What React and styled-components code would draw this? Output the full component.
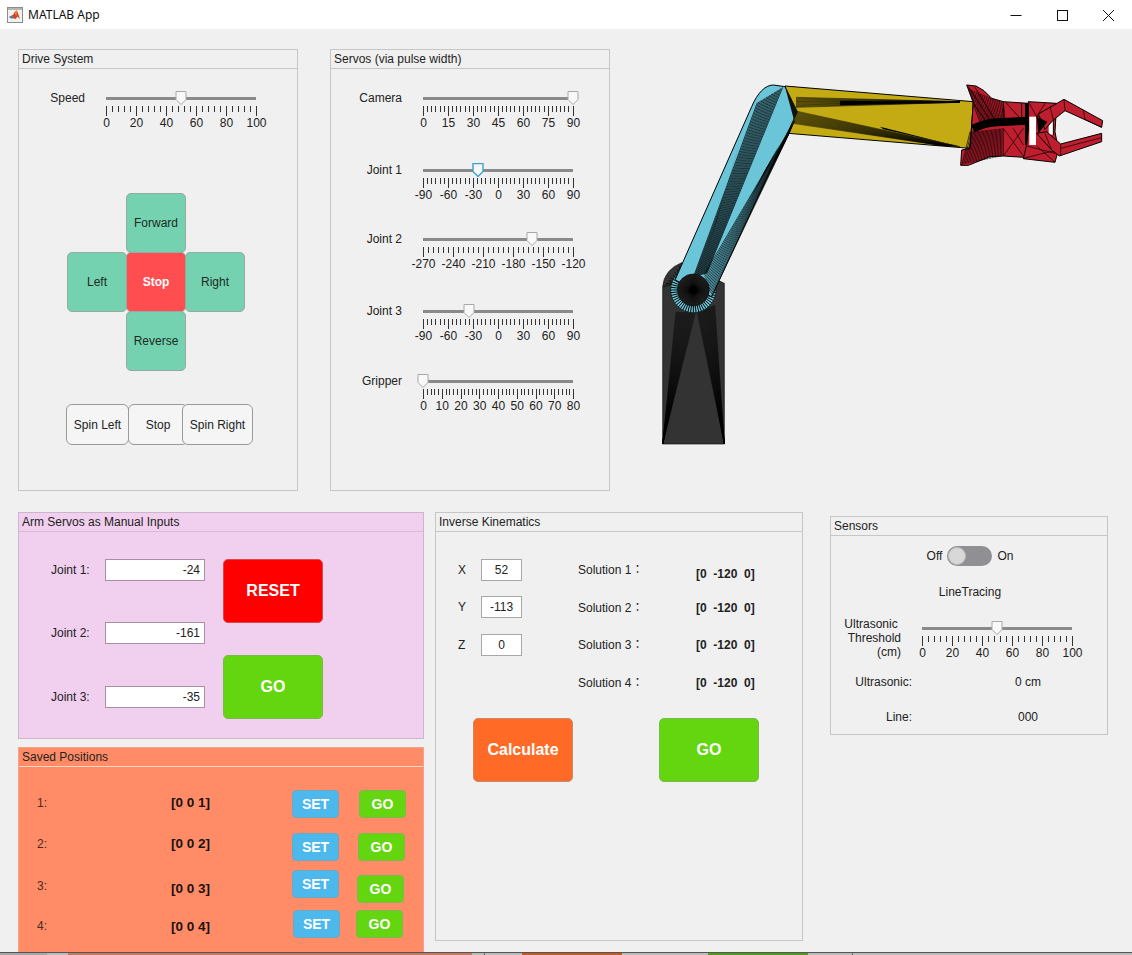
import React from 'react';
import styled, { createGlobalStyle } from 'styled-components';

const GlobalStyle = createGlobalStyle`
    html, body {
        margin: 0;
        padding: 0;
        background: #f0f0f0;
    }
    body {
        font-family: "Liberation Sans", Arial, sans-serif;
        font-size: 12px;
        color: #222;
    }
`

const Page = styled.div`
    width: 1132px;
    height: 955px;
    display: flex;
    flex-direction: column;
    overflow: hidden;
`

const TitleBar = styled.div`
    height: 29px;
    flex: none;
    background: #fff;
    display: flex;
    align-items: center;
    padding-left: 7px;
    font-family: "Noto Sans", sans-serif;
    font-size: 12px;
    color: #111;
`

const AppName = styled.span`
    margin-left: 5px;
`

const WindowButtons = styled.div`
    margin-left: auto;
    display: flex;
    gap: 26px;
    padding-right: 14px;
`

const WinIcon = styled.svg`
    width: 20px;
    height: 20px;
    display: block;
    fill: none;
    stroke: #111;
    stroke-width: 1;
`

const Content = styled.div`
    flex: 1;
    min-height: 0;
    padding: 20px 0 0 18px;
    display: flex;
    flex-direction: column;
`

const TopRow = styled.div`
    display: flex;
    height: 442px;
    flex: none;
`

const BottomRow = styled.div`
    display: flex;
    flex: 1;
    min-height: 0;
    margin-top: 21px;
    align-items: flex-start;
`

const LeftStack = styled.div`
    width: 406px;
    height: 100%;
    display: flex;
    flex-direction: column;
    gap: 8px;
`

const Panel = styled.div`
    box-sizing: border-box;
    width: ${props => props.$width}px;
    height: ${props => props.$height ? props.$height + 'px' : 'auto'};
    flex: ${props => props.$grow ? 1 : 'none'};
    margin-left: ${props => props.$left || 0}px;
    margin-top: ${props => props.$top || 0}px;
    background: ${props => props.$bg || '#f0f0f0'};
    border: 1px solid ${props => props.$line || '#c6c6c6'};
    border-bottom-width: ${props => props.$open ? 0 : 1}px;
`

const PanelTitle = styled.div`
    height: 18px;
    line-height: 18px;
    padding-left: 3px;
    border-bottom: 1px solid ${props => props.$line || '#c6c6c6'};
`

const PanelBody = styled.div`
    padding-top: ${props => props.$pad}px;
`

// sliders
const SliderRow = styled.div`
    display: flex;
    align-items: flex-start;
    margin-top: ${props => props.$top || 0}px;
`

const SliderLabel = styled.div`
    width: ${props => props.$width}px;
    margin-right: 21px;
    text-align: right;
    line-height: 14px;
    flex: none;
`

const SliderBox = styled.div`
    position: relative;
    width: 151px;
    height: 39px;
    margin-top: ${props => props.$top || 0}px;
`

const Track = styled.div`
    width: 150px;
    height: 3px;
    margin-top: 6px;
    background: #8a8a8a;
`

const Thumb = styled.svg`
    position: absolute;
    top: 0;
    width: 12px;
    height: 14px;
    margin-left: -6px;
    fill: #f8f8f8;
    stroke: ${props => props.$active ? '#3aa0d2' : '#a8a8a8'};
    stroke-width: ${props => props.$active ? 1.4 : 1};
`

const Ticks = styled.div`
    display: flex;
    justify-content: space-between;
    align-items: flex-start;
    height: 10px;
    margin-top: 6px;
`

const Tick = styled.i`
    width: 1px;
    height: ${props => props.$major ? 10 : 6}px;
    background: #333;
`

const TickLabels = styled.div`
    display: flex;
    justify-content: space-between;
    line-height: 14px;
`

const TickLabel = styled.span`
    width: 1px;
    display: flex;
    justify-content: center;
    white-space: nowrap;
`

function Slider({ labels, sub, min, max, value, active, top }) {
    const count = (labels.length - 1) * sub;
    const ticks = [];
    for (let i = 0; i <= count; i++) {
        ticks.push(<Tick key={i} $major={i % sub === 0} />);
    }
    return (
        <SliderBox $top={top}>
            <Track />
            <Thumb $active={active} viewBox="0 0 12 14" style={{ left: ((value - min) / (max - min)) * 150 }}>
                <path d="M1 .5H11V8.5L6 13.5L1 8.5Z" />
            </Thumb>
            <Ticks>{ticks}</Ticks>
            <TickLabels>
                {labels.map(l => <TickLabel key={l}>{l}</TickLabel>)}
            </TickLabels>
        </SliderBox>
    )
}

// drive buttons
const Dpad = styled.div`
    display: grid;
    grid-template-columns: repeat(3, 59px);
    grid-template-rows: repeat(3, 59px);
    margin: 63px 0 0 48px;
`

const DriveButton = styled.div`
    box-sizing: border-box;
    width: 60px;
    height: 60px;
    grid-column: ${props => props.$col};
    grid-row: ${props => props.$row};
    z-index: ${props => props.$stop ? 1 : 0};
    display: flex;
    align-items: center;
    justify-content: center;
    border-radius: 5px;
    border: 1px solid #98a8a2;
    background: ${props => props.$stop ? '#ff4d50' : '#75d2b0'};
    color: ${props => props.$stop ? '#fff' : '#1c2a25'};
    font-weight: ${props => props.$stop ? 'bold' : 'normal'};
`

const SpinRow = styled.div`
    display: flex;
    margin: 34px 0 0 47px;
`

const SpinButton = styled.div`
    box-sizing: border-box;
    width: ${props => props.$width}px;
    height: 41px;
    margin-left: ${props => props.$overlap || 0}px;
    display: flex;
    align-items: center;
    justify-content: center;
    border: 1px solid #9a9a9a;
    border-radius: 6px;
    background: #f5f5f5;
`

// arm servo panel
const ArmBody = styled.div`
    display: flex;
    padding: 27px 0 0 32px;
`

const JointColumn = styled.div`
    display: flex;
    flex-direction: column;
`

const JointRow = styled.div`
    display: flex;
    align-items: center;
    margin-top: ${props => props.$top || 0}px;
`

const JointLabel = styled.div`
    width: 54px;
`

const NumberField = styled.div`
    box-sizing: border-box;
    width: ${props => props.$width}px;
    height: 22px;
    line-height: 20px;
    background: #fff;
    border: 1px solid ${props => props.$line || '#a8a8a8'};
    text-align: ${props => props.$center ? 'center' : 'right'};
    padding: 0 4px;
`

const ButtonColumn = styled.div`
    display: flex;
    flex-direction: column;
    gap: 32px;
    margin-left: 18px;
`

const BigButton = styled.div`
    box-sizing: border-box;
    width: 100px;
    height: 64px;
    display: flex;
    align-items: center;
    justify-content: center;
    border-radius: 5px;
    border: 1px solid ${props => props.$line};
    background: ${props => props.$bg};
    color: #fff;
    font-size: 16px;
    font-weight: bold;
`

// saved positions
const SavedList = styled.div`
    padding-left: 18px;
`

const SavedRow = styled.div`
    display: flex;
    align-items: flex-start;
    height: 28px;
    margin-top: ${props => props.$top}px;
`

const SavedIndex = styled.div`
    width: 134px;
    flex: none;
    line-height: 14px;
    margin-top: ${props => props.$dy}px;
    color: #4a2a1e;
`

const SavedValue = styled.div`
    width: 121px;
    flex: none;
    line-height: 14px;
    margin-top: ${props => props.$dy}px;
    font-size: 13.5px;
    font-weight: bold;
    color: #1a1210;
`

const SmallButton = styled.div`
    box-sizing: border-box;
    width: 47px;
    height: 28px;
    flex: none;
    margin-left: ${props => props.$left || 0}px;
    margin-top: ${props => props.$dy || 0}px;
    display: flex;
    align-items: center;
    justify-content: center;
    border-radius: 4px;
    border: 1px solid ${props => props.$line};
    background: ${props => props.$bg};
    color: #fff;
    font-size: 14px;
    font-weight: bold;
`

// inverse kinematics
const IkTop = styled.div`
    display: flex;
    padding: 27px 0 0 22px;
`

const AxisColumn = styled.div`
    display: flex;
    flex-direction: column;
`

const AxisRow = styled.div`
    display: flex;
    align-items: center;
    margin-top: ${props => props.$top || 0}px;
`

const AxisLabel = styled.div`
    width: 23px;
`

const SolutionColumn = styled.div`
    margin: 4px 0 0 56px;
    display: flex;
    flex-direction: column;
`

const SolutionRow = styled.div`
    display: flex;
    align-items: flex-start;
    height: 14px;
    line-height: 14px;
    margin-top: ${props => props.$top || 0}px;
`

const SolutionName = styled.div`
    width: 118px;
    font-family: "Liberation Sans", "Noto Sans CJK JP", sans-serif;
`

const SolutionValue = styled.div`
    font-weight: bold;
    white-space: pre;
    margin-top: ${props => props.$dy || 0}px;
`

const IkButtons = styled.div`
    display: flex;
    gap: 86px;
    margin: 28px 0 0 37px;
`

// sensors
const ToggleRow = styled.div`
    display: flex;
    align-items: center;
    justify-content: center;
    gap: 5px;
    margin-top: 10px;
    padding-left: 2px;
`

const Switch = styled.div`
    box-sizing: border-box;
    width: 45px;
    height: 20px;
    padding: 1px;
    border-radius: 10px;
    background: #8f8f94;
    display: flex;
`

const SwitchKnob = styled.div`
    box-sizing: border-box;
    width: 18px;
    height: 18px;
    border-radius: 50%;
    background: #d8d8d8;
    border: 1px solid #bcbcbc;
`

const CenterText = styled.div`
    text-align: center;
    line-height: 14px;
    margin-top: 19px;
    padding-left: 2px;
`

const ReadoutRow = styled.div`
    display: flex;
    line-height: 14px;
    margin-top: ${props => props.$top}px;
`

const ReadoutName = styled.div`
    width: 81px;
    text-align: right;
`

const ReadoutValue = styled.div`
    width: 112px;
    margin-left: 60px;
    text-align: center;
`

// the strip of whatever lies behind the window
const BehindStrip = styled.div`
    flex: none;
    height: 3px;
    box-sizing: border-box;
    display: flex;
    border-top: 1px solid #555;
`

const BehindPiece = styled.div`
    width: ${props => props.$width}px;
    flex: ${props => props.$width ? 'none' : 1};
    background: ${props => props.$color};
`

const RobotSvg = styled.svg`
    width: 480px;
    height: 380px;
    flex: none;
    margin: 21px 0 0 30px;
`

const lerp = (a, b, t) => [a[0] + (b[0] - a[0]) * t, a[1] + (b[1] - a[1]) * t];

function fan(a1, a2, b1, b2, n) {
    let d = '';
    for (let i = 0; i <= n; i++) {
        const p = lerp(a1, a2, i / n);
        const q = lerp(b1, b2, i / n);
        d += `M${p[0].toFixed(1)} ${p[1].toFixed(1)}L${q[0].toFixed(1)} ${q[1].toFixed(1)}`;
    }
    return d;
}

function spokes(cx, cy, r1, r2, n) {
    let d = '';
    for (let i = 0; i < n; i++) {
        const a = (i / n) * Math.PI * 2;
        d += `M${(cx + Math.cos(a) * r1).toFixed(1)} ${(cy + Math.sin(a) * r1).toFixed(1)}L${(cx + Math.cos(a) * r2).toFixed(1)} ${(cy + Math.sin(a) * r2).toFixed(1)}`;
    }
    return d;
}

// coordinates are in 3x pixels, that is why the viewBox is three times the size
function Robot() {
    return (
        <RobotSvg viewBox="0 0 1440 1140">
            {/* base */}
            <path d="M68 1122V650Q72 600 125 578L253 640V1122Z" fill="#333" stroke="#111" strokeWidth="2" />
            <path d={fan([68, 1122], [68, 1122], [108, 725], [166, 728], 22)} stroke="#000" strokeWidth="1.3" fill="none" />
            <path d={fan([253, 1122], [253, 1122], [172, 728], [224, 705], 22)} stroke="#000" strokeWidth="1.3" fill="none" />
            <path d={fan([70, 650], [125, 580], [100, 640], [130, 620], 8)} stroke="#000" strokeWidth="2" fill="none" />
            <circle cx="160" cy="660" r="68" fill="#6bc5d9" stroke="#111" strokeWidth="2" />
            <path d={spokes(160, 660, 48, 68, 52)} stroke="#000" strokeWidth="3" fill="none" />

            {/* upper arm */}
            <path d="M435 48L1000 95L990 235L445 190Z" fill="#c4ab14" stroke="#000" strokeWidth="3" />
            <path d={fan([468, 82], [468, 112], [960, 95], [960, 97], 12)} stroke="#000" strokeWidth="1.6" fill="none" />
            <path d="M600 92L960 96L600 106Z" fill="#000" />
            <path d={fan([472, 124], [458, 160], [960, 230], [900, 226], 18)} stroke="#000" strokeWidth="1.4" fill="none" />
            <path d="M720 170L960 230L730 178Z" fill="#000" />

            {/* lower arm */}
            <path d="M105 630L335 110C352 70 375 45 400 45L435 50L472 125L215 680Z" fill="#6bc5d9" stroke="#000" strokeWidth="3" />
            <path d={fan([352, 98], [428, 52], [160, 622], [200, 610], 16)} stroke="#000" strokeWidth="2.2" fill="none" />
            <path d="M300 215L268 325L200 545L232 445Z" fill="#000" />
            <path d={fan([465, 150], [445, 195], [192, 615], [215, 678], 12)} stroke="#000" strokeWidth="2" fill="none" />
            <path d="M418 225L385 290L335 380L372 305Z" fill="#000" />
            <path d="M435 50L472 125L462 150Z" fill="#111" />
            <circle cx="160" cy="660" r="48" fill="#2a2a2a" stroke="#111" strokeWidth="2" />
            <path d={spokes(160, 660, 0, 48, 72)} stroke="#000" strokeWidth="1.5" fill="none" />
            <circle cx="160" cy="660" r="13" fill="#000" />

            {/* gripper body */}
            <path d="M980 45L1008 48L1032 62L1055 85L1090 95L1165 100V225L1150 262L1090 258L1050 260L1020 272L985 286H962L965 240L990 235L1000 95Z" fill="#bf1e2e" stroke="#000" strokeWidth="3" />
            <path d="M985 50L1050 150M1005 52L1065 150M1000 100L1035 150M1090 95V150M1098 98L1145 150M1145 100V150" stroke="#000" strokeWidth="2.5" fill="none" />
            <path d={fan([984, 55], [1090, 98], [1020, 158], [1095, 150], 18)} stroke="#000" strokeWidth="2" fill="none" />
            <path d={fan([966, 284], [1090, 258], [990, 185], [1090, 175], 26)} stroke="#000" strokeWidth="2" fill="none" />
            <path d="M1090 175L1150 258M1150 175L1090 258M1120 175L1150 225" stroke="#000" strokeWidth="2" fill="none" />
            <path d="M998 176Q1045 154 1090 156L1165 152" stroke="#000" strokeWidth="24" fill="none" />
            <path d="M1155 100H1168V225H1155Z" fill="#000" />

            {/* blocks and fingers */}
            <path d="M1165 95L1250 100L1245 185L1255 240L1245 277L1150 266L1160 225L1165 180Z" fill="#bf1e2e" stroke="#000" strokeWidth="3" />
            <path d="M1168 100L1190 140L1215 100M1190 140H1245M1160 228L1245 250M1150 265L1250 240M1190 228L1245 277" stroke="#000" strokeWidth="2" fill="none" />
            <rect x="1168" y="140" width="20" height="85" fill="#fff" />
            <rect x="1226" y="150" width="14" height="44" fill="#fff" />
            <path d="M1240 145V195" stroke="#000" strokeWidth="3" />
            <path d="M1195 132L1272 88L1388 152L1385 172L1275 122L1240 150L1215 178Z" fill="#bf1e2e" stroke="#000" strokeWidth="3" />
            <path d="M1272 88L1275 122M1230 110L1240 150M1330 120L1335 148L1385 172" stroke="#000" strokeWidth="2" fill="none" />
            <path d="M1190 190L1220 185L1262 222L1385 190V215L1258 258L1235 240Z" fill="#bf1e2e" stroke="#000" strokeWidth="3" />
            <path d="M1262 222V258M1262 235L1385 203M1215 190L1235 240" stroke="#000" strokeWidth="2" fill="none" />
            <path d="M1190 140L1222 155L1195 190Z" fill="#000" />
        </RobotSvg>
    )
}

function MatlabIcon() {
    return (
        <svg width="16" height="16" viewBox="0 0 16 16">
            <rect x=".5" y=".5" width="15" height="15" fill="#f1f1f1" stroke="#8c8c8c" />
            <rect x="1" y="1" width="14" height="2" fill="#b5b5b5" />
            <path d="M2 10L6 8L8 4.5L10 3.5L13 12L10.5 9.5L8.5 12Z" fill="#d8401c" />
            <path d="M2 10L5 12L6.5 9.5L6 8Z" fill="#4a7fb0" />
            <path d="M8 4.5L10 3.5L9.5 9L8 7Z" fill="#f08a2a" />
        </svg>
    )
}

const savedRows = [
    { id: 1, top: 23, labelY: 6, valueY: 6, setLeft: 0, goLeft: 20, goY: 0, value: '[0 0 1]' },
    { id: 2, top: 15, labelY: 4, valueY: 4, setLeft: 0, goLeft: 19, goY: 0, value: '[0 0 2]' },
    { id: 3, top: 9, labelY: 9, valueY: 12, setLeft: 0, goLeft: 18, goY: 5, value: '[0 0 3]' },
    { id: 4, top: 12, labelY: 9, valueY: 10, setLeft: 1, goLeft: 16, goY: 0, value: '[0 0 4]' },
];

const solutionRows = [
    { id: 1, top: 0, dy: 4 },
    { id: 2, top: 24, dy: 0 },
    { id: 3, top: 23, dy: 0 },
    { id: 4, top: 24, dy: 0 },
];

const jointRows = [
    { name: 'Joint 1:', value: -24, top: 0 },
    { name: 'Joint 2:', value: -161, top: 41 },
    { name: 'Joint 3:', value: -35, top: 42 },
];

const axisRows = [
    { name: 'X', value: 52, top: 0 },
    { name: 'Y', value: -113, top: 15 },
    { name: 'Z', value: 0, top: 16 },
];

const servoRows = [
    { name: 'Camera', labels: [0, 15, 30, 45, 60, 75, 90], sub: 6, min: 0, max: 90, value: 90, top: 0 },
    { name: 'Joint 1', labels: [-90, -60, -30, 0, 30, 60, 90], sub: 6, min: -90, max: 90, value: -24, top: 33, active: true },
    { name: 'Joint 2', labels: [-270, -240, -210, -180, -150, -120], sub: 6, min: -270, max: -120, value: -161, top: 30 },
    { name: 'Joint 3', labels: [-90, -60, -30, 0, 30, 60, 90], sub: 6, min: -90, max: 90, value: -35, top: 33 },
    { name: 'Gripper', labels: [0, 10, 20, 30, 40, 50, 60, 70, 80], sub: 5, min: 0, max: 80, value: 0, top: 31 },
];

const behindPieces = [
    [47, '#a6a6a6'], [21, '#bcbcbc'], [404, '#c07a62'], [12, '#bcbcbc'], [1, '#666'],
    [37, '#bcbcbc'], [100, '#c05a2a'], [86, '#bcbcbc'], [100, '#4f9a1f'], [44, '#bcbcbc'], [1, '#666'],
];

const GREEN = '#64d60f';

export default function App() {
    return (
        <Page>
            <GlobalStyle />
            <TitleBar>
                <MatlabIcon />
                <AppName>MATLAB App</AppName>
                <WindowButtons>
                    <WinIcon viewBox="0 0 20 20"><path d="M4.5 10.5H15.5" /></WinIcon>
                    <WinIcon viewBox="0 0 20 20"><rect x="5.5" y="5.5" width="10" height="10" /></WinIcon>
                    <WinIcon viewBox="0 0 20 20"><path d="M5 5L16 16M16 5L5 16" /></WinIcon>
                </WindowButtons>
            </TitleBar>
            <Content>
                <TopRow>
                    <Panel $width={280}>
                        <PanelTitle>Drive System</PanelTitle>
                        <PanelBody $pad={22}>
                            <SliderRow>
                                <SliderLabel $width={66}>Speed</SliderLabel>
                                <Slider labels={[0, 20, 40, 60, 80, 100]} sub={5} min={0} max={100} value={50} />
                            </SliderRow>
                            <Dpad>
                                <DriveButton $col={2} $row={1}>Forward</DriveButton>
                                <DriveButton $col={1} $row={2}>Left</DriveButton>
                                <DriveButton $col={2} $row={2} $stop>Stop</DriveButton>
                                <DriveButton $col={3} $row={2}>Right</DriveButton>
                                <DriveButton $col={2} $row={3}>Reverse</DriveButton>
                            </Dpad>
                            <SpinRow>
                                <SpinButton $width={63}>Spin Left</SpinButton>
                                <SpinButton $width={60} $overlap={-1}>Stop</SpinButton>
                                <SpinButton $width={71} $overlap={-6}>Spin Right</SpinButton>
                            </SpinRow>
                        </PanelBody>
                    </Panel>
                    <Panel $width={280} $left={32}>
                        <PanelTitle>Servos (via pulse width)</PanelTitle>
                        <PanelBody $pad={22}>
                            {servoRows.map(s => (
                                <SliderRow key={s.name} $top={s.top}>
                                    <SliderLabel $width={71}>{s.name}</SliderLabel>
                                    <Slider labels={s.labels} sub={s.sub} min={s.min} max={s.max} value={s.value} active={s.active} />
                                </SliderRow>
                            ))}
                        </PanelBody>
                    </Panel>
                    <Robot />
                </TopRow>
                <BottomRow>
                    <LeftStack>
                        <Panel $width={406} $height={227} $bg="#f1cfee" $line="#cdb6cb">
                            <PanelTitle $line="#d8bcd5">Arm Servos as Manual Inputs</PanelTitle>
                            <ArmBody>
                                <JointColumn>
                                    {jointRows.map(j => (
                                        <JointRow key={j.name} $top={j.top}>
                                            <JointLabel>{j.name}</JointLabel>
                                            <NumberField $width={100} $line="#a88fa6">{j.value}</NumberField>
                                        </JointRow>
                                    ))}
                                </JointColumn>
                                <ButtonColumn>
                                    <BigButton $bg="#ff0000" $line="#d84a4a">RESET</BigButton>
                                    <BigButton $bg={GREEN} $line="#7cb84e">GO</BigButton>
                                </ButtonColumn>
                            </ArmBody>
                        </Panel>
                        <Panel $width={406} $grow $open $bg="#ff8c66" $line="#f0a488">
                            <PanelTitle $line="#ffd5c4">Saved Positions</PanelTitle>
                            <SavedList>
                                {savedRows.map(r => (
                                    <SavedRow key={r.id} $top={r.top}>
                                        <SavedIndex $dy={r.labelY}>{r.id}:</SavedIndex>
                                        <SavedValue $dy={r.valueY}>{r.value}</SavedValue>
                                        <SmallButton $bg="#4db8ec" $line="#6aa9c4" $left={r.setLeft}>SET</SmallButton>
                                        <SmallButton $bg={GREEN} $line="#7cb84e" $left={r.goLeft} $dy={r.goY}>GO</SmallButton>
                                    </SavedRow>
                                ))}
                            </SavedList>
                        </Panel>
                    </LeftStack>
                    <Panel $width={368} $height={429} $left={11}>
                        <PanelTitle>Inverse Kinematics</PanelTitle>
                        <IkTop>
                            <AxisColumn>
                                {axisRows.map(a => (
                                    <AxisRow key={a.name} $top={a.top}>
                                        <AxisLabel>{a.name}</AxisLabel>
                                        <NumberField $width={41} $center>{a.value}</NumberField>
                                    </AxisRow>
                                ))}
                            </AxisColumn>
                            <SolutionColumn>
                                {solutionRows.map(s => (
                                    <SolutionRow key={s.id} $top={s.top}>
                                        <SolutionName>Solution {s.id}：</SolutionName>
                                        <SolutionValue $dy={s.dy}>{'[0  -120  0]'}</SolutionValue>
                                    </SolutionRow>
                                ))}
                            </SolutionColumn>
                        </IkTop>
                        <IkButtons>
                            <BigButton $bg="#ff6a26" $line="#c98a6a">Calculate</BigButton>
                            <BigButton $bg={GREEN} $line="#7cb84e">GO</BigButton>
                        </IkButtons>
                    </Panel>
                    <Panel $width={278} $height={219} $left={27} $top={4}>
                        <PanelTitle>Sensors</PanelTitle>
                        <ToggleRow>
                            <span>Off</span>
                            <Switch><SwitchKnob /></Switch>
                            <span>On</span>
                        </ToggleRow>
                        <CenterText>LineTracing</CenterText>
                        <SliderRow $top={18}>
                            <SliderLabel $width={70}>Ultrasonic&nbsp;<br />Threshold<br />(cm)</SliderLabel>
                            <Slider labels={[0, 20, 40, 60, 80, 100]} sub={5} min={0} max={100} value={50} top={4} />
                        </SliderRow>
                        <ReadoutRow $top={15}>
                            <ReadoutName>Ultrasonic:</ReadoutName>
                            <ReadoutValue>0 cm</ReadoutValue>
                        </ReadoutRow>
                        <ReadoutRow $top={21}>
                            <ReadoutName>Line:</ReadoutName>
                            <ReadoutValue>000</ReadoutValue>
                        </ReadoutRow>
                    </Panel>
                </BottomRow>
            </Content>
            <BehindStrip>
                {behindPieces.map(([w, c], i) => <BehindPiece key={i} $width={w} $color={c} />)}
                <BehindPiece $color="#bcbcbc" />
            </BehindStrip>
        </Page>
    )
}
